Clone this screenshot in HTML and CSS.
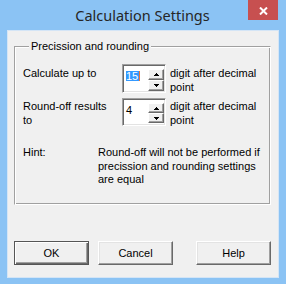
FILE: index.html
```html
<!DOCTYPE html>
<html>
<head>
<meta charset="utf-8">
<link rel="stylesheet" href="styles.css">
</head>
<body>
<div class="window">
  <div class="titlebar">
    <span class="title">Calculation Settings</span>
    <span class="close">
      <svg width="9" height="8" viewBox="0 0 9 8"><path d="M1 0.5 L8 7.5 M8 0.5 L1 7.5" stroke="#fff" stroke-width="2"/></svg>
    </span>
  </div>
  <div class="client">
    <fieldset class="group">
      <legend>Precission and rounding</legend>
      <div class="rows">
        <div class="label first">Calculate up to</div>
        <div class="spin tall">
          <div class="spin-text"><span class="sel">15</span></div>
          <div class="spin-btns">
            <span class="sb"><svg width="5" height="3" viewBox="0 0 5 3"><rect x="2" y="0" width="1" height="1"/><rect x="1" y="1" width="3" height="1"/><rect x="0" y="2" width="5" height="1"/></svg></span>
            <span class="sb"><svg width="5" height="3" viewBox="0 0 5 3"><rect x="0" y="0" width="5" height="1"/><rect x="1" y="1" width="3" height="1"/><rect x="2" y="2" width="1" height="1"/></svg></span>
          </div>
        </div>
        <div class="desc first">digit after decimal<br>point</div>

        <div class="label second">Round-off results<br>to</div>
        <div class="spin">
          <div class="spin-text"><span class="plain">4</span></div>
          <div class="spin-btns">
            <span class="sb"><svg width="5" height="3" viewBox="0 0 5 3"><rect x="2" y="0" width="1" height="1"/><rect x="1" y="1" width="3" height="1"/><rect x="0" y="2" width="5" height="1"/></svg></span>
            <span class="sb"><svg width="5" height="3" viewBox="0 0 5 3"><rect x="0" y="0" width="5" height="1"/><rect x="1" y="1" width="3" height="1"/><rect x="2" y="2" width="1" height="1"/></svg></span>
          </div>
        </div>
        <div class="desc second">digit after decimal<br>point</div>
      </div>
      <div class="hint">
        <div class="hint-label">Hint:</div>
        <div class="hint-text">Round-off will not be performed if<br>precission and rounding settings<br>are equal</div>
      </div>
    </fieldset>
    <div class="buttons">
      <button class="btn default">OK</button>
      <button class="btn cancel">Cancel</button>
      <button class="btn help">Help</button>
    </div>
  </div>
</div>
</body>
</html>
```

FILE: styles.css
```css
html, body {
  margin: 0;
  padding: 0;
}
body {
  width: 286px;
  height: 284px;
  overflow: hidden;
}
.window {
  width: 286px;
  height: 284px;
  box-sizing: border-box;
  background: #8bc3f4;
  padding: 0 7px 6px 7px;
  display: flex;
  flex-direction: column;
}
.titlebar {
  height: 30px;
  flex: none;
  position: relative;
  display: flex;
  align-items: center;
  justify-content: center;
}
.title {
  font-family: "Noto Sans", "Open Sans", sans-serif;
  font-size: 14.5px;
  color: #262626;
  margin-left: -1px;
}
.close {
  position: absolute;
  top: 0;
  right: 1px;
  width: 30px;
  height: 20px;
  background: #c75050;
  display: flex;
  align-items: center;
  justify-content: center;
}
.close svg {
  display: block;
  margin-top: 2px;
}
.client {
  flex: 1;
  background: #f0f0f0;
  border: 1px solid #d4e5f6;
  padding: 0 7px 0 6px;
  font-family: "Liberation Sans", Arial, sans-serif;
  font-size: 11px;
  color: #000;
}
.group {
  margin: 9px 0 0 0;
  min-width: 0;
  padding: 12px 0 17px 8px;
  border: 1px solid;
  border-color: #a0a0a0 #fff #fff #a0a0a0;
  box-shadow: inset 1px 1px 0 #fff, inset -1px -1px 0 #a0a0a0;
}
.group legend {
  margin-left: 6px;
  padding: 0 2px;
  line-height: 12px;
  background: #f0f0f0;
}
.rows {
  display: grid;
  grid-template-columns: 99px 44px auto;
  grid-template-rows: 29px 28px;
  row-gap: 5px;
  line-height: 14px;
}
.desc {
  margin-left: 4px;
}
.label.first, .desc.first {
  margin-top: 2px;
}
.label.second, .desc.second {
  margin-top: 1px;
}
.spin {
  box-sizing: border-box;
  border: 1px solid;
  border-color: #a0a0a0 #fff #fff #a0a0a0;
  box-shadow: inset 1px 1px 0 #696969, inset -1px -1px 0 #e3e3e3;
  background: #fff;
  display: flex;
  padding: 1px;
}
.spin-text {
  flex: 1;
  padding: 5px 0 0 2px;
  line-height: 10px;
}
.sel {
  display: inline-block;
  height: 10px;
  line-height: 10px;
  padding: 0 1px 0 0;
  background: #3399ff;
  color: #fff;
  border-right: 1px solid #e8743b;
}
.plain {
  display: inline-block;
  line-height: 10px;
}
.spin-btns {
  width: 16px;
  padding-top: 3px;
  display: flex;
  flex-direction: column;
}
.sb {
  box-sizing: border-box;
  height: 11px;
  background: #f0f0f0;
  border: 1px solid;
  border-color: #fff #696969 #696969 #fff;
  box-shadow: inset -1px -1px 0 #a0a0a0;
  display: flex;
  align-items: center;
  justify-content: center;
}
.spin:not(.tall) .sb {
  height: 10px;
}
.sb svg {
  display: block;
  fill: #000;
}
.hint {
  display: grid;
  grid-template-columns: 75px auto;
  margin-top: 20px;
  line-height: 13.5px;
}
.buttons {
  display: flex;
  margin-top: 36px;
}
.btn {
  width: 75px;
  height: 24px;
  box-sizing: border-box;
  padding: 0;
  margin: 0;
  background: #f0f0f0;
  border: 1px solid;
  border-color: #fff #696969 #696969 #fff;
  box-shadow: inset -1px -1px 0 #a0a0a0, inset 1px 1px 0 #e3e3e3;
  font-family: "Liberation Sans", Arial, sans-serif;
  font-size: 11px;
  color: #000;
}
.btn.default {
  border-color: #555;
  box-shadow: inset 1px 1px 0 #fff, inset -1px -1px 0 #696969, inset -2px -2px 0 #a0a0a0;
}
.btn.cancel {
  margin-left: 9px;
}
.btn.help {
  margin-left: auto;
}
```
